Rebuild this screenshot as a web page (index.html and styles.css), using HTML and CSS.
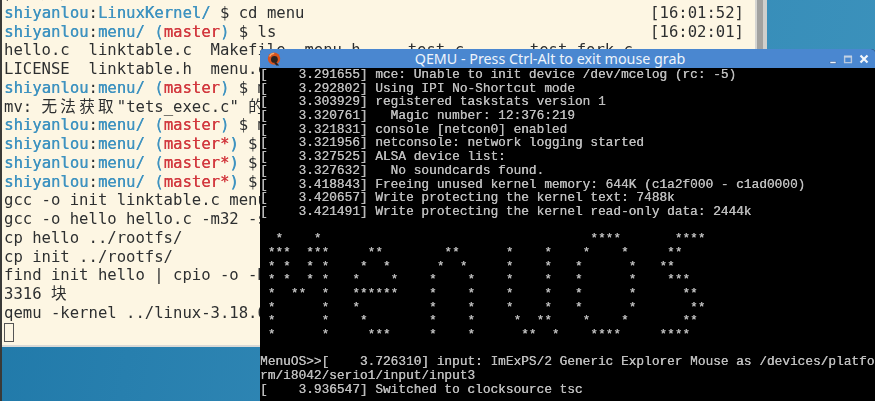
FILE: index.html
```html
<!DOCTYPE html>
<html lang="en">
<head>
<meta charset="utf-8">
<title>QEMU</title>
<link rel="stylesheet" href="styles.css">
</head>
<body>
<div class="desktop">
  <section class="terminal">
    <div class="term-body">
      <div class="line"><span class="cjk">检查通过</span>     Work</div>
      <div class="line row"><span><span class="user">shiyanlou</span>:<span class="path">LinuxKernel/</span> $ cd menu</span><span>[16:01:52]</span></div>
      <div class="line row"><span><span class="user">shiyanlou</span>:<span class="path">menu/</span> <span class="path">(</span><span class="git">master</span><span class="path">)</span> $ ls</span><span>[16:02:01]</span></div>
      <div class="line">hello.c  linktable.c  Makefile  menu.h     test.c       test_fork.c</div>
      <div class="line">LICENSE  linktable.h  menu.c</div>
      <div class="line"><span class="user">shiyanlou</span>:<span class="path">menu/</span> <span class="path">(</span><span class="git">master</span><span class="path">)</span> $ mv</div>
      <div class="line">mv: <span class="cjk">无法获取</span>"tets_exec.c" <span class="cjk">的文件状态</span></div>
      <div class="line"><span class="user">shiyanlou</span>:<span class="path">menu/</span> <span class="path">(</span><span class="git">master</span><span class="path">)</span> $ mv</div>
      <div class="line"><span class="user">shiyanlou</span>:<span class="path">menu/</span> <span class="path">(</span><span class="git">master*</span><span class="path">)</span> $ vi</div>
      <div class="line"><span class="user">shiyanlou</span>:<span class="path">menu/</span> <span class="path">(</span><span class="git">master*</span><span class="path">)</span> $ vi</div>
      <div class="line"><span class="user">shiyanlou</span>:<span class="path">menu/</span> <span class="path">(</span><span class="git">master*</span><span class="path">)</span> $ make</div>
      <div class="line">gcc -o init linktable.c menu.c test.c</div>
      <div class="line">gcc -o hello hello.c -m32 -static</div>
      <div class="line">cp hello ../rootfs/</div>
      <div class="line">cp init ../rootfs/</div>
      <div class="line">find init hello | cpio -o -H newc</div>
      <div class="line">3316 <span class="cjk">块</span></div>
      <div class="line">qemu -kernel ../linux-3.18.6/arch</div>
      <div class="line"><span class="cursor"></span></div>
    </div>
    <div class="scrollbar"></div>
  </section>

  <section class="qemu">
    <header class="titlebar">
      <svg class="app-icon" viewBox="0 0 14 14" aria-hidden="true">
        <circle cx="7" cy="6.6" r="6.2" fill="#d9541e"/>
        <circle cx="7.4" cy="7.4" r="3.4" fill="#2b2320"/>
        <path d="M9 10l3.2 3.6-2.8-.2-2.4-2.6z" fill="#2b2320"/>
        <path d="M2.6 4.4a5 5 0 0 1 4.6-3" fill="none" stroke="#f6ad70" stroke-width="1.2"/>
      </svg>
      <span class="title">QEMU - Press Ctrl-Alt to exit mouse grab</span>
      <div class="controls">
        <svg viewBox="0 0 12 12" aria-hidden="true"><path d="M4 8.5h6v2H4z" fill="#eef3fa" stroke="#3b5f92" stroke-width=".5"/></svg>
        <svg viewBox="0 0 12 12" aria-hidden="true"><path d="M2.6 3.6h6.8v6H2.6z" fill="none" stroke="#b9c9de" stroke-width="1.4"/><path d="M2 3.6h8" stroke="#c4d2e4" stroke-width="2"/></svg>
        <svg viewBox="0 0 12 12" aria-hidden="true"><path d="M2.5 2.5l7 7M9.5 2.5l-7 7" stroke="#f2f6fb" stroke-width="2.2"/></svg>
      </div>
    </header>
<pre class="vga">[    3.291655] mce: Unable to init device /dev/mcelog (rc: -5)
[    3.292802] Using IPI No-Shortcut mode
[    3.303929] registered taskstats version 1
[    3.320761]   Magic number: 12:376:219
[    3.321831] console [netcon0] enabled
[    3.321956] netconsole: network logging started
[    3.327525] ALSA device list:
[    3.327632]   No soundcards found.
[    3.418843] Freeing unused kernel memory: 644K (c1a2f000 - c1ad0000)
[    3.420657] Write protecting the kernel text: 7488k
[    3.421491] Write protecting the kernel read-only data: 2444k

  *    *                                   ****       ****
 ***  ***     **        **      *    *    *    *     **
 * *  * *    *  *      *  *     *    *   *      *   **
 * *  * *   *    *    *    *    *    *   *      *    ***
 *  **  *   ******    *    *    *    *   *      *      **
 *      *   *         *    *    *    *   *      *       **
 *      *    *        *    *     *  **    *    *       **
 *      *     ***     *    *      **  *    ****     ****

MenuOS&gt;&gt;[    3.726310] input: ImExPS/2 Generic Explorer Mouse as /devices/platfo
rm/i8042/serio1/input/input3
[    3.936547] Switched to clocksource tsc</pre>
  </section>
</div>
</body>
</html>
```
FILE: styles.css
```css
* { box-sizing: border-box; }
html, body { margin: 0; padding: 0; width: 875px; height: 401px; overflow: hidden; }
.desktop {
  position: relative;
  width: 875px;
  height: 401px;
  overflow: hidden;
  background: linear-gradient(100deg, #1f78a8 0%, #2f86b4 40%, #3c92bc 100%);
  border-left: 2px solid #3a3a38;
}
.terminal {
  position: absolute;
  left: 0;
  top: -15px;
  width: 765px;
  height: 362px;
  display: flex;
  border-bottom: 2px solid #d9d9d6;
  background: #fdf6e3;
}
.term-body {
  flex: 1;
  padding: 0 11px 0 2px;
  font-family: "DejaVu Sans Mono", "Noto Sans CJK SC", monospace;
  font-size: 15.6px;
  line-height: 18.76px;
  color: #2d2f30;
  overflow: hidden;
  filter: blur(0.35px);
}
.line { height: 18.76px; white-space: pre; }
.row { display: flex; justify-content: space-between; }
.cjk { letter-spacing: 3.2px; }
.user { color: #3f93c0; text-shadow: 0.4px 0 0 #3f93c0; }
.path { color: #3f93c0; text-shadow: 0.3px 0 0 #3f93c0; }
.git { color: #d2393f; text-shadow: 0.3px 0 0 #d2393f; }
.cursor {
  display: inline-block;
  width: 10px;
  height: 19px;
  border: 1px solid #555;
  vertical-align: top;
}
.scrollbar {
  width: 12px;
  background: #a2a2a0;
  border-left: 2px solid #d5d5d2;
  border-right: 4px solid #cfcfcc;
}
.qemu {
  position: absolute;
  left: 258px;
  top: 49px;
  width: 617px;
  height: 352px;
  display: flex;
  flex-direction: column;
  background: #000;
  border-right: 1px solid #3a6ea8;
  border-top-left-radius: 4px;
  border-top-right-radius: 6px;
  overflow: hidden;
}
.titlebar {
  position: relative;
  height: 19px;
  flex: none;
  display: flex;
  align-items: center;
  justify-content: center;
  padding-right: 36px;
  background: #4a87d0;
}
.app-icon {
  position: absolute;
  left: 7px;
  top: 3px;
  width: 14px;
  height: 14px;
}
.title {
  font-family: "Noto Sans", sans-serif;
  font-size: 14.3px;
  line-height: 19px;
  color: #eef4fb;
}
.controls {
  position: absolute;
  right: 6px;
  top: 4px;
  display: flex;
  gap: 4px;
}
.controls svg { width: 12px; height: 12px; display: block; }
.vga {
  flex: 1;
  margin: 0;
  font-family: "Liberation Mono", monospace;
  font-size: 12.8px;
  line-height: 13.68px;
  color: #bdbdbd;
  white-space: pre;
  overflow: hidden;
  text-shadow: 0.3px 0 0 #bdbdbd;
  filter: blur(0.3px);
}
```
